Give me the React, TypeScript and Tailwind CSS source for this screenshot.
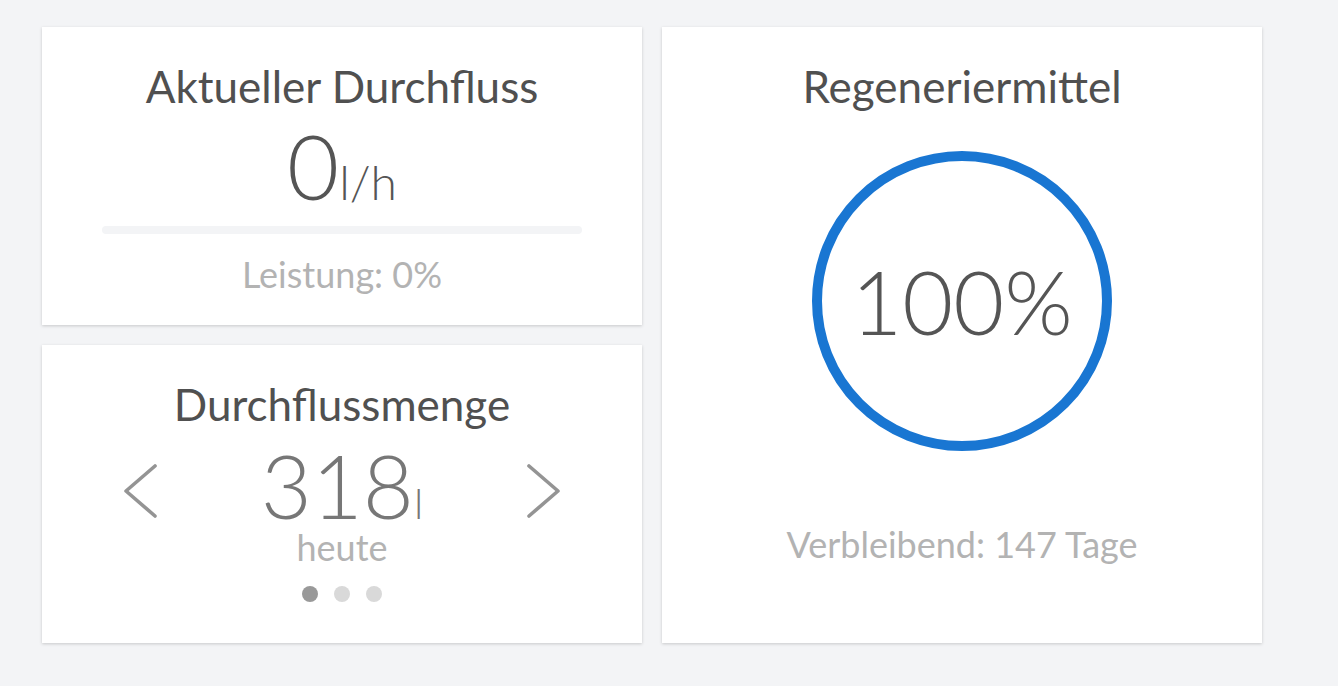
const font = { fontFamily: 'Lato, "Open Sans", sans-serif' };

function Chevron({ dir }: { dir: 'left' | 'right' }) {
  return (
    <svg width="36" height="56" viewBox="0 0 36 56" fill="none" className="self-start mt-[22px]">
      <path
        d={dir === 'left' ? 'M33 3 L4 28 L33 53' : 'M3 3 L32 28 L3 53'}
        stroke="#949494"
        strokeWidth="3.6"
        strokeLinecap="round"
        strokeLinejoin="round"
      />
    </svg>
  );
}

function Card({ children, className = '' }: { children: React.ReactNode; className?: string }) {
  return (
    <div
      className={`bg-white shadow-[0_1px_3px_rgba(0,0,0,0.18)] flex flex-col items-center pt-[33px] ${className}`}
    >
      {children}
    </div>
  );
}

function Title({ text }: { text: string }) {
  return <h2 className="text-[44px] leading-[1.2] text-[#505050]">{text}</h2>;
}

export default function App() {
  const dots = [true, false, false];

  return (
    <div className="min-h-screen w-full bg-[#f3f4f6] px-[42px] pt-[27px]" style={font}>
      <div className="flex gap-[20px] items-start">
        <div className="flex flex-col gap-[20px] w-[600px]">
          <Card className="h-[298px]">
            <Title text="Aktueller Durchfluss" />
            <div className="mt-[7px] flex items-baseline font-light text-[#555555] leading-none">
              <span className="text-[90px] leading-[90px]">0</span>
              <span className="text-[48px]">l/h</span>
            </div>
            <div className="mt-[16px] h-[8px] w-[480px] rounded-full bg-[#f3f4f6]" />
            <div className="mt-[19px] text-[36px] leading-[1.2] text-[#b3b3b3]">Leistung: 0%</div>
          </Card>

          <Card className="h-[298px]">
            <Title text="Durchflussmenge" />
            <div className="mt-[10px] flex justify-center w-full gap-[94px]">
              <Chevron dir="left" />
              <div className="flex flex-col items-center w-[180px]">
                <div className="flex items-baseline font-light text-[#777777] leading-none h-[88px]">
                  <span className="text-[88px] leading-[88px]">318</span>
                  <span className="text-[42px]">l</span>
                </div>
                <div className="text-[36px] leading-none text-[#b3b3b3]">heute</div>
              </div>
              <Chevron dir="right" />
            </div>
            <div className="mt-[21px] flex gap-[16px]">
              {dots.map((active, i) => (
                <span
                  key={i}
                  className={`w-[16px] h-[16px] rounded-full ${active ? 'bg-[#999999]' : 'bg-[#d9d9d9]'}`}
                />
              ))}
            </div>
          </Card>
        </div>

        <Card className="w-[600px] h-[616px]">
          <Title text="Regeneriermittel" />
          <div className="mt-[38px] w-[300px] h-[300px] rounded-full border-[10px] border-[#1976d2] flex items-center justify-center">
            <span className="text-[88px] font-light leading-none text-[#555555]">100%</span>
          </div>
          <div className="mt-[72px] text-[36px] leading-[1.2] text-[#b3b3b3]">Verbleibend: 147 Tage</div>
        </Card>
      </div>
    </div>
  );
}
